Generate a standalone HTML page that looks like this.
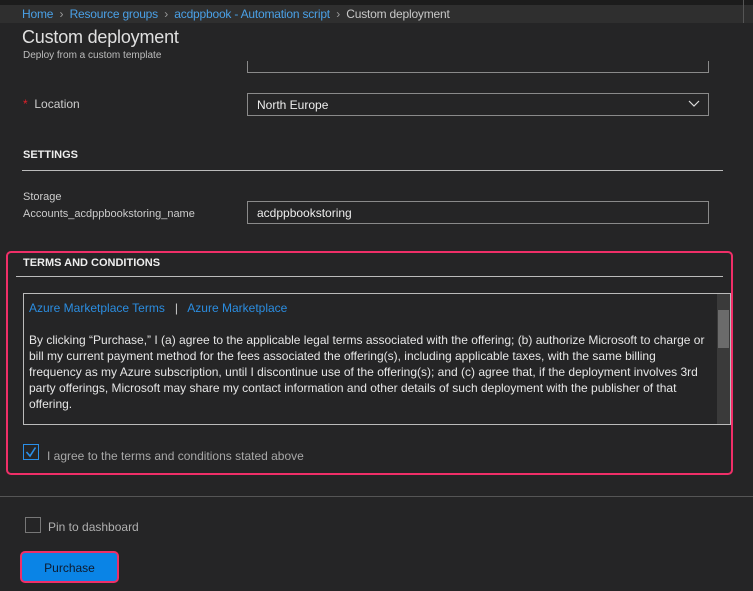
<!DOCTYPE html>
<html><head><style>
*{box-sizing:border-box;margin:0;padding:0}
body{width:753px;height:591px;background:#252526;font-family:"Liberation Sans",sans-serif;color:#e6e6e6;position:relative;overflow:hidden;font-size:12px}
.a{position:absolute;white-space:nowrap}
.box{position:absolute;border:1px solid #8a8a8a;background:#252526}
</style></head><body>
<div class="box" style="left:247px;top:40px;width:462px;height:33px"></div>
<div class="a" style="left:0;top:23px;width:753px;height:38px;background:#252526"></div>
<div class="a" style="left:0;top:0;width:753px;height:5px;background:#1c1c1c"></div>
<div class="a" style="left:0;top:5px;width:753px;height:18px;background:#2f2f2f"></div>
<div class="a" style="left:743px;top:0;width:1px;height:23px;background:#555"></div>
<div class="a" style="left:22px;top:7px;font-size:12px;color:#9b9b9b;letter-spacing:-0.2px"><span style="color:#4aa0e6">Home</span> &nbsp;›&nbsp; <span style="color:#4aa0e6">Resource groups</span> &nbsp;›&nbsp; <span style="color:#4aa0e6">acdppbook - Automation script</span> &nbsp;›&nbsp; <span style="color:#c8c8c8">Custom deployment</span></div>
<div class="a" style="left:22px;top:27px;font-size:18px;color:#e0e0e0;font-weight:300;letter-spacing:-0.2px">Custom deployment</div>
<div class="a" style="left:23px;top:50px;font-size:10px;color:#bdbdbd">Deploy from a custom template</div>
<div class="a" style="left:23px;top:97px;font-size:12px;color:#ccc"><span style="color:#e0202a">*</span>&nbsp; Location</div>
<div class="box" style="left:247px;top:93px;width:462px;height:23px"></div>
<div class="a" style="left:257px;top:98px;font-size:12px;color:#eee">North Europe</div>
<svg class="a" style="left:688px;top:100px" width="12" height="8"><path d="M1 1 L6 6 L11 1" stroke="#ddd" fill="none" stroke-width="1.2"/></svg>
<div class="a" style="left:23px;top:149px;font-size:11px;font-weight:bold;color:#eee">SETTINGS</div>
<div class="a" style="left:22px;top:170px;width:701px;height:1px;background:#bbb"></div>
<div class="a" style="left:23px;top:189px;font-size:11px;color:#ccc;line-height:17px">Storage<br>Accounts_acdppbookstoring_name</div>
<div class="box" style="left:247px;top:201px;width:462px;height:23px"></div>
<div class="a" style="left:257px;top:206px;font-size:12px;color:#eee">acdppbookstoring</div>
<div class="a" style="left:6px;top:251px;width:727px;height:224px;border:2px solid #ef2f68;border-radius:5px"></div>
<div class="a" style="left:23px;top:257px;font-size:11px;font-weight:bold;color:#eee">TERMS AND CONDITIONS</div>
<div class="a" style="left:16px;top:276px;width:707px;height:1px;background:#bbb"></div>
<div class="a" style="left:23px;top:293px;width:708px;height:132px;border:1px solid #bbb;background:#252526"></div>
<div class="a" style="left:717px;top:294px;width:13px;height:130px;background:#3a3a3a"></div>
<div class="a" style="left:718px;top:310px;width:11px;height:38px;background:#6b6b6b"></div>
<div class="a" style="left:29px;top:301px;font-size:12px;color:#2b8de0">Azure Marketplace Terms &nbsp;&nbsp;<span style="color:#ccc">|</span>&nbsp;&nbsp; Azure Marketplace</div>
<div class="a" style="left:29px;top:332px;font-size:12px;color:#e6e6e6;line-height:16px;white-space:normal;width:680px">By clicking “Purchase,” I (a) agree to the applicable legal terms associated with the offering; (b) authorize Microsoft to charge or bill my current payment method for the fees associated the offering(s), including applicable taxes, with the same billing frequency as my Azure subscription, until I discontinue use of the offering(s); and (c) agree that, if the deployment involves 3rd party offerings, Microsoft may share my contact information and other details of such deployment with the publisher of that offering.</div>
<div class="a" style="left:23px;top:444px;width:16px;height:16px;border:1px solid #2a8fe8"></div>
<svg class="a" style="left:25px;top:446px" width="12" height="12"><path d="M1.5 6 L5 10 L10.5 1.5" stroke="#2a8fe8" fill="none" stroke-width="1.6"/></svg>
<div class="a" style="left:47px;top:449px;font-size:12px;color:#a8a8a8">I agree to the terms and conditions stated above</div>
<div class="a" style="left:0;top:496px;width:753px;height:1px;background:#555"></div>
<div class="a" style="left:25px;top:517px;width:16px;height:16px;border:1px solid #777"></div>
<div class="a" style="left:48px;top:520px;font-size:12px;color:#b0b0b0">Pin to dashboard</div>
<div class="a" style="left:20px;top:551px;width:99px;height:32px;border:2px solid #ef2f68;border-radius:5px;background:#0a84e6"></div>
<div class="a" style="left:20px;top:561px;width:99px;text-align:center;font-size:12px;color:#0d1a2e">Purchase</div>
</body></html>
